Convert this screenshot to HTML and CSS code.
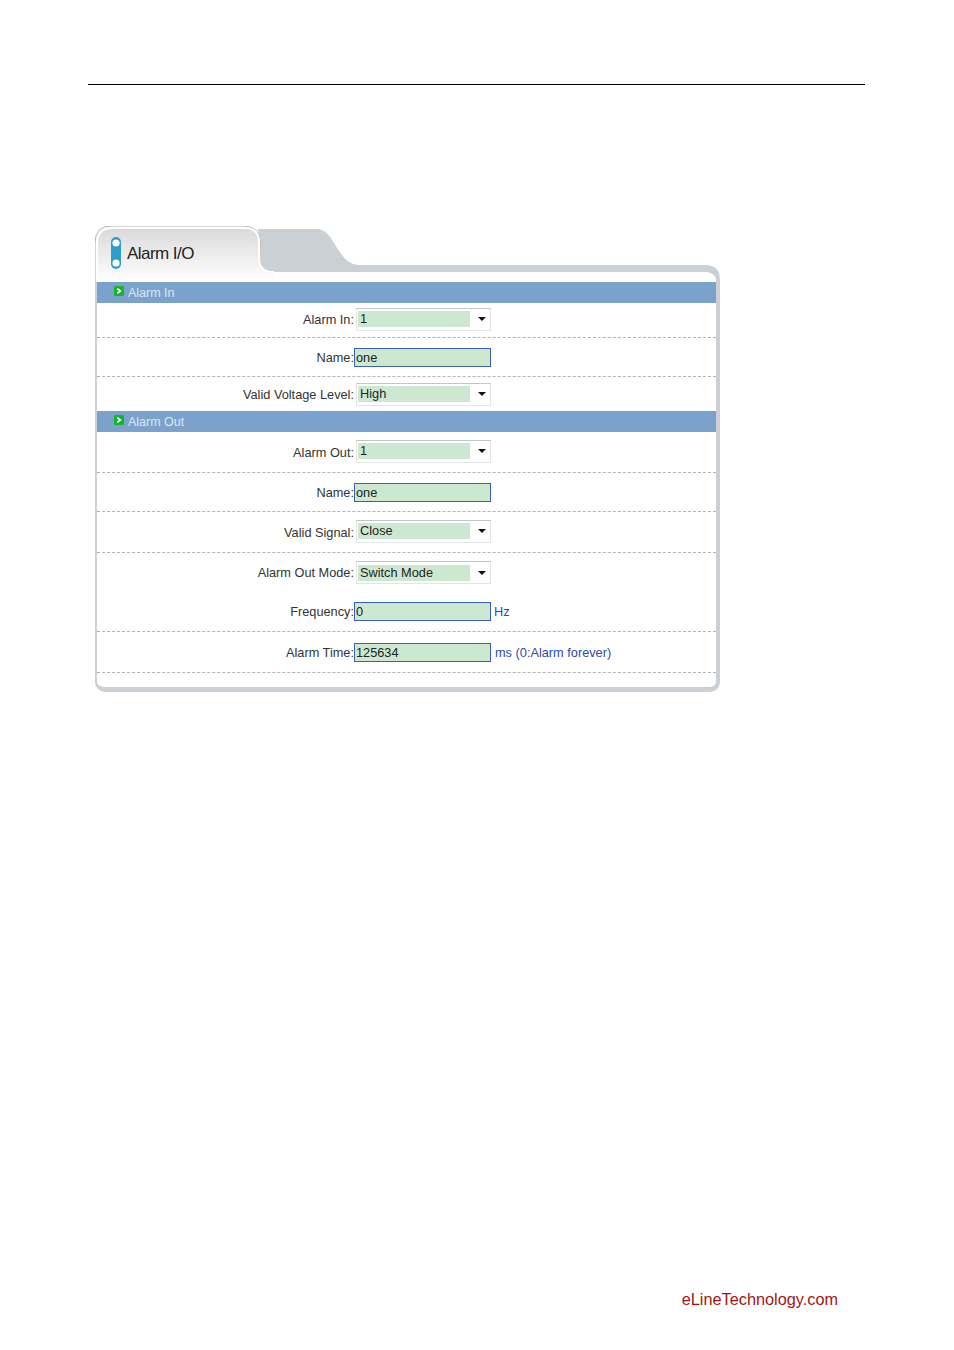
FILE: index.html
```html
<!DOCTYPE html>
<html lang="en">
<head>
<meta charset="utf-8">
<title>Alarm I/O</title>
<link rel="stylesheet" href="styles.css">
</head>
<body>
<div class="page">
  <hr class="rule">
  <section class="panel">
    <header class="head">
      <svg class="head-art" width="625" height="56" viewBox="0 0 625 56" aria-hidden="true">
        <defs>
          <linearGradient id="tabfill" x1="0" y1="0" x2="0" y2="1">
            <stop offset="0" stop-color="#d9d9d9"/>
            <stop offset="0.75" stop-color="#f6f6f6"/>
            <stop offset="1" stop-color="#ffffff"/>
          </linearGradient>
        </defs>
        <path d="M150 3H221C231 3 235 10 242 22C249 33 255 39 265 39H610Q625 39 625 54V56H621V55Q621 46 608 46H178Q166 46 163 36V3Z" fill="#cbd0d4"/>
        <path d="M0 56V17Q0 0 17 0H148Q165 0 165 16V20" fill="none" stroke="#aeb0b2" stroke-width="1"/>
        <path d="M2 56V18Q2 2 18 2H149Q164 2 164 16V34Q165 46 179 46H606V56Z" fill="url(#tabfill)"/>
        <path d="M2 56V18Q2 2 18 2H149Q164 2 164 16V34Q165 46 179 46" fill="none" stroke="#ffffff" stroke-width="2"/>
        <path d="M178 46H608Q621 46 621 56H178Z" fill="#ffffff"/>
      </svg>
      <svg class="pill" width="10" height="32" viewBox="0 0 10 32" aria-hidden="true">
        <rect width="10" height="32" rx="5" fill="#2f9dc8"/>
        <circle cx="5" cy="6" r="3.6" fill="#ffffff"/>
        <circle cx="5" cy="26" r="3.6" fill="#ffffff"/>
      </svg>
      <h1 class="title">Alarm I/O</h1>
    </header>
    <div class="body">
      <div class="band">
        <svg class="band-icon" width="10" height="10" viewBox="0 0 10 10" aria-hidden="true"><rect width="10" height="10" rx="1.5" fill="#17b32e"/><path d="M3.2 2.6 6.4 5 3.2 7.4" fill="none" stroke="#ffffff" stroke-width="1.6"/></svg>
        <span>Alarm In</span>
      </div>
      <div class="row h35 dash raise"><span class="label">Alarm In:</span><div class="select"><span class="select-value">1</span><i class="caret"></i></div></div>
      <div class="row h39 dash"><span class="label">Name:</span><div class="input">one</div></div>
      <div class="row h34"><span class="label">Valid Voltage Level:</span><div class="select"><span class="select-value">High</span><i class="caret"></i></div></div>
      <div class="band">
        <svg class="band-icon" width="10" height="10" viewBox="0 0 10 10" aria-hidden="true"><rect width="10" height="10" rx="1.5" fill="#17b32e"/><path d="M3.2 2.6 6.4 5 3.2 7.4" fill="none" stroke="#ffffff" stroke-width="1.6"/></svg>
        <span>Alarm Out</span>
      </div>
      <div class="row h41 dash raise-control"><span class="label">Alarm Out:</span><div class="select"><span class="select-value">1</span><i class="caret"></i></div></div>
      <div class="row h39 dash"><span class="label">Name:</span><div class="input">one</div></div>
      <div class="row h41 dash raise-control"><span class="label">Valid Signal:</span><div class="select"><span class="select-value">Close</span><i class="caret"></i></div></div>
      <div class="row h39"><span class="label">Alarm Out Mode:</span><div class="select"><span class="select-value">Switch Mode</span><i class="caret"></i></div></div>
      <div class="row h40 dash"><span class="label">Frequency:</span><div class="input">0</div><span class="unit unit-tight">Hz</span></div>
      <div class="row h41 dash"><span class="label">Alarm Time:</span><div class="input">125634</div><span class="unit">ms (0:Alarm forever)</span></div>
      <div class="tail"></div>
    </div>
  </section>
  <footer class="footer">eLineTechnology.com</footer>
</div>
</body>
</html>
```
FILE: styles.css
```css
html, body { margin: 0; padding: 0; background: #fff; }
.page {
  box-sizing: border-box;
  height: 1350px;
  padding-top: 84px;
  display: flex;
  flex-direction: column;
  font-family: "Liberation Sans", Arial, sans-serif;
  font-size: 12.75px;
  color: #333;
  overflow: hidden;
}
.rule { margin: 0 89px 0 88px; border: 0; height: 1px; background: #000; flex: none; }
.panel { margin: 141px 0 0 95px; width: 625px; flex: none; }
.head { position: relative; height: 56px; display: flex; align-items: flex-start; }
.head-art { position: absolute; left: 0; top: 0; }
.pill { position: relative; margin: 11px 0 0 16px; }
.title {
  position: relative;
  margin: 18px 0 0 6px;
  font-size: 17px;
  line-height: 20px;
  font-weight: 400;
  letter-spacing: -0.55px;
  color: #222;
}
.body {
  border: solid #cbd0d4;
  border-width: 0 4px 5px 2px;
  border-radius: 0 0 10px 10px;
  background: #fff;
  height: 405px;
  box-sizing: content-box;
}
.band {
  height: 21px;
  background: #7ba2cb;
  color: #dce6f1;
  display: flex;
  align-items: center;
  padding-left: 17px;
  gap: 4px;
  font-size: 12.5px;
}
.band-icon { margin-top: -3px; }
.row {
  display: grid;
  grid-template-columns: 257px 137px auto;
  align-items: center;
  box-sizing: border-box;
}
.raise { padding-bottom: 2px; }
.raise-control .select { margin-bottom: 2px; }
.h34 { height: 34px; }
.h35 { height: 35px; }
.h39 { height: 39px; }
.h40 { height: 40px; }
.h41 { height: 41px; }
.dash { border-bottom: 1px dashed #b4b4b4; }
.label { text-align: right; white-space: nowrap; }
.select {
  box-sizing: border-box;
  margin-left: 2px;
  width: 135px;
  height: 23px;
  border: 1px solid #e2e4e8;
  border-top-color: #c4c4c4;
  display: flex;
  align-items: center;
  padding: 0 4px 0 1px;
  justify-content: space-between;
}
.select-value {
  width: 112px;
  height: 16px;
  line-height: 15px;
  background: #cde8d0;
  color: #222;
  padding-left: 2px;
  box-sizing: border-box;
}
.caret {
  width: 0;
  height: 0;
  border: 4px solid transparent;
  border-top-color: #111;
  border-bottom: 0;
}
.input {
  box-sizing: border-box;
  height: 19px;
  border: 1px solid #3a5fbf;
  background: #cde8d0;
  color: #222;
  line-height: 18px;
  padding-left: 1px;
}
.unit { color: #2b4bb0; padding-left: 4px; white-space: nowrap; }
.unit-tight { padding-left: 3px; }
.footer {
  margin-top: auto;
  padding: 0 116px 42px 0;
  text-align: right;
  font-size: 16.3px;
  line-height: 18px;
  color: #a31414;
}
```
